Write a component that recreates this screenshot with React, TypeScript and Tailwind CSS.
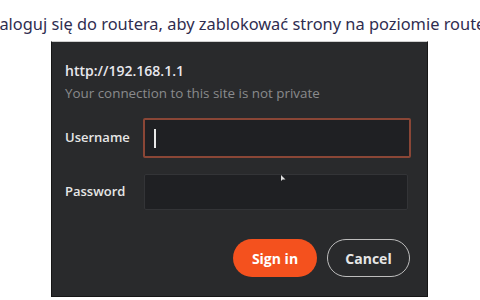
export default function App() {
  return (
    <div className="w-[480px] h-[300px] bg-white overflow-hidden relative">
      {/* caption above the screenshot */}
      <div className="h-[41px] flex items-center overflow-hidden">
        <p
          className="whitespace-nowrap text-[16.4px] text-[#2f2d50] pt-[8px] ml-[-10px]"
          style={{ fontFamily: '"Noto Sans", sans-serif' }}
        >
          Zaloguj się do routera, aby zablokować strony na poziomie routera.
        </p>
      </div>

      <div className="ml-[51px] w-[377px] h-[256px] bg-[#292a2c] border border-[#161616] border-t-[#cfcfcf] px-[13px] pt-[20px]"
        style={{ fontFamily: '"Open Sans", sans-serif' }}
      >
        <div className="text-[14px] leading-[18px] font-semibold text-[#e8e8ee]">http://192.168.1.1</div>
        <div className="text-[13.4px] leading-[18px] mt-[4px] text-[#8a8a8c]">Your connection to this site is not private</div>

        <div className="flex items-center mt-[16px]">
          <label className="w-[78px] text-[13px] font-semibold text-[#e6e6e6]">Username</label>
          <div className="w-[268px] h-[40px] bg-[#1f2023] border-2 border-[#8a4636] rounded-[2px] flex items-center pl-[9px]">
            <div className="w-[2px] h-[19px] bg-[#e8e8e8]" />
          </div>
        </div>

        <div className="flex items-center mt-[16px]">
          <label className="w-[79px] text-[13px] font-semibold text-[#e6e6e6]">Password</label>
          <div className="w-[264px] h-[36px] bg-[#1f2023] border border-[#333437] rounded-[2px]" />
        </div>

        <div className="flex justify-end gap-[10px] mt-[29px] pr-[4px]">
          <button className="w-[84px] h-[38px] rounded-full bg-[#f4511e] text-white text-[14px] font-bold">Sign in</button>
          <button className="w-[83px] h-[38px] rounded-full border border-[#bdbdbd] text-[#e6e6e6] text-[14px] font-bold">Cancel</button>
        </div>
      </div>

      {/* mouse pointer */}
      <svg className="absolute left-[281px] top-[175px]" width="5" height="7" viewBox="0 0 5 7">
        <path d="M0 0 L0 6 L1.6 4.6 L4.5 4.5 Z" fill="#e0e0e0" />
      </svg>
    </div>
  )
}
